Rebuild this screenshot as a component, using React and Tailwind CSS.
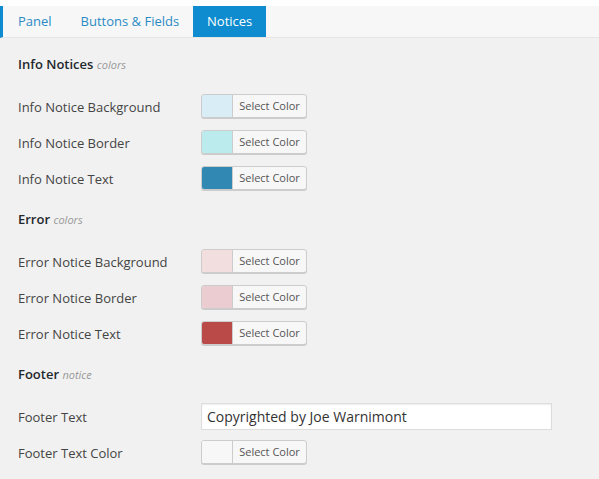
import React from 'react';

const sections = [
  {
    title: 'Info Notices',
    note: 'colors',
    rows: [
      { label: 'Info Notice Background', color: '#d9edf7' },
      { label: 'Info Notice Border', color: '#bcebee' },
      { label: 'Info Notice Text', color: '#3188b3' },
    ],
  },
  {
    title: 'Error',
    note: 'colors',
    rows: [
      { label: 'Error Notice Background', color: '#f2dede' },
      { label: 'Error Notice Border', color: '#ebccd1' },
      { label: 'Error Notice Text', color: '#b94a48' },
    ],
  },
];

function ColorButton({ color }) {
  return (
    <button className="flex h-[24px] w-[106px] items-stretch overflow-hidden rounded-[3px] border border-[#cccccc] bg-[#f7f7f7] shadow-[0_1px_0_#cccccc]">
      <span className="w-[31px] border-r border-[#cccccc]" style={{ backgroundColor: color }} />
      <span className="flex flex-1 items-center justify-center text-[11px] text-[#555555]">Select Color</span>
    </button>
  );
}

function Row({ label, children }) {
  return (
    <div className="flex h-[36px] items-center">
      <div className="w-[183px] pt-[4px] text-[13px] text-[#444444]">{label}</div>
      {children}
    </div>
  );
}

function Heading({ title, note }) {
  return (
    <h3 className="h-[40px] pt-[14px] text-[13px] font-semibold text-[#23282d]">
      {title} <span className="text-[11px] font-normal italic text-[#999999]">{note}</span>
    </h3>
  );
}

export default function App() {
  return (
    <div className="min-h-screen bg-white pt-[6px] font-['Open_Sans',sans-serif]">
      <div className="flex h-[32px] border-b border-[#e5e5e5] border-l-[3px] border-l-[#0e8ccf] bg-[#f7f7f7]">
        <a className="flex items-center px-[15px] text-[13px] text-[#2a8bc4]">Panel</a>
        <a className="flex items-center px-[14px] text-[13px] text-[#2a8bc4]">Buttons &amp; Fields</a>
        <a className="flex w-[73px] items-center justify-center bg-[#0e8ccf] text-[13px] text-white">Notices</a>
      </div>
      <div className="min-h-[441px] bg-[#f1f1f1] px-[18px] pt-[3px]">
        {sections.map(s => (
          <div key={s.title}>
            <Heading title={s.title} note={s.note} />
            <div className="pt-[7px]">
              {s.rows.map(r => (
                <Row key={r.label} label={r.label}>
                  <ColorButton color={r.color} />
                </Row>
              ))}
            </div>
          </div>
        ))}
        <Heading title="Footer" note="notice" />
        <div className="pt-[7px]">
          <Row label="Footer Text">
            <input
              className="h-[27px] w-[351px] border border-[#dddddd] bg-white px-[5px] text-[14px] text-[#333333] shadow-[inset_0_1px_2px_rgba(0,0,0,0.07)] outline-none"
              defaultValue="Copyrighted by Joe Warnimont"
            />
          </Row>
          <Row label="Footer Text Color">
            <ColorButton color="#f7f7f7" />
          </Row>
        </div>
      </div>
    </div>
  );
}
